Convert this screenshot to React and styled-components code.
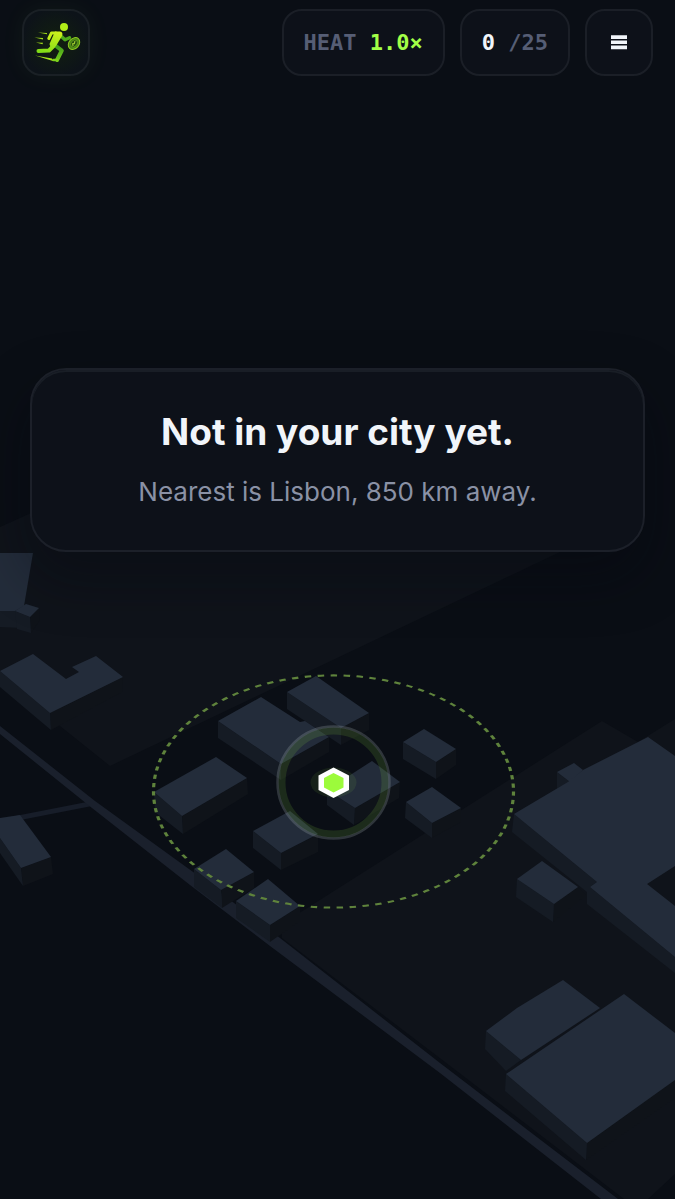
import React from 'react';
import styled, { createGlobalStyle } from 'styled-components';

// Styled Components

const GlobalStyle = createGlobalStyle`
  * {
    box-sizing: border-box;
  }

  body {
    margin: 0;
    background-color: #0a0e15;
    font-family: Inter, 'Liberation Sans', sans-serif;
  }
`;

const Screen = styled.div`
  position: relative;
  display: flex;
  flex-direction: column;
  min-height: 100vh;
  overflow: hidden;
  background-color: #0a0e15;
`;

/* The map is the canvas that everything else floats on */
const MapCanvas = styled.svg`
  position: absolute;
  inset: 0;
  width: 100%;
  height: 100%;
`;

const TopBar = styled.header`
  position: relative;
  display: flex;
  align-items: center;
  gap: 15px;
  padding: 9px 22px;
`;

const LogoLink = styled.a`
  display: flex;
  align-items: center;
  justify-content: center;
  width: 68px;
  height: 67px;
  margin-right: auto;
  border: 2px solid #1a2025;
  border-radius: 20px;
  background: radial-gradient(circle, #12200f 0%, #0d1319 75%);
  box-shadow: 0 0 24px rgba(163, 255, 71, 0.05);
`;

const Pill = styled.div`
  display: flex;
  align-items: center;
  height: 67px;
  padding: 0 20px;
  border: 2px solid #1b1f27;
  border-radius: 20px;
  background-color: #0d1119;
  color: ${(props) => props.$color || '#f1f5fa'};
  font-family: 'DejaVu Sans Mono', 'Liberation Mono', monospace;
  font-size: 22px;
  font-weight: 700;
  white-space: pre;
`;

const Muted = styled.span`
  color: #565e75;
`;

const MenuButton = styled.button`
  display: flex;
  align-items: center;
  justify-content: center;
  width: 68px;
  height: 67px;
  padding: 0;
  border: 2px solid #1b1f27;
  border-radius: 20px;
  background-color: #0d1119;
  color: #f1f5fa;
  cursor: pointer;
`;

const Content = styled.main`
  position: relative;
  padding: 283px 30px 0;
`;

const NoticeCard = styled.section`
  display: flex;
  flex-direction: column;
  align-items: center;
  gap: 12px;
  padding: 38px 24px 34px;
  border: 2px solid #1c2029;
  border-radius: 36px;
  background-color: #0d1119;
  box-shadow:
    inset 0 2px 0 #191e26,
    0 24px 56px rgba(5, 8, 14, 0.4);
  text-align: center;
`;

const NoticeTitle = styled.h1`
  margin: 0;
  color: #f1f5fa;
  font-size: 37px;
  font-weight: 700;
  line-height: 48px;
`;

const NoticeText = styled.p`
  margin: 0;
  color: #8a91a5;
  font-size: 26px;
  line-height: 48px;
`;

// Map data

const LAND = [
  '0,527 60,500 620,500 560,552 110,766 60,726 0,680',
  '282,924 602,721 638,742 675,719 675,1174 648,1199 624,1199 445,1062 282,938',
];

// Each building is a roof with its two visible walls
const BUILDINGS = [
  { roof: '0,553 33,553 24,606 15,611 0,611', left: '0,611 15,611 22,628 0,627' },
  {
    roof: '15,611 26,604 39,608 30,617',
    left: '15,611 30,617 31,633 17,629',
    right: '30,617 39,608 40,620 31,633',
  },
  {
    roof: '0,671 33,654 66,679 79,672 72,667 96,656 123,677 50,713',
    left: '0,671 50,713 51,730 0,687',
    right: '50,713 123,677 122,692 51,730',
  },
  {
    roof: '0,818 20,815 51,857 21,868 0,838',
    left: '0,838 21,868 23,886 0,853',
    right: '21,868 51,857 53,874 23,886',
  },
  {
    roof: '287,692 316,676 369,713 341,728',
    left: '287,692 341,728 341,745 287,709',
    right: '341,728 369,713 369,730 341,745',
  },
  {
    roof: '218,721 261,697 300,722 305,721 329,737 281,764',
    left: '218,721 281,764 281,780 218,738',
    right: '281,764 329,737 329,752 281,780',
  },
  {
    roof: '154,792 216,757 247,778 182,816',
    left: '154,792 182,816 183,834 155,812',
    right: '182,816 247,778 248,794 183,834',
  },
  {
    roof: '253,831 290,811 318,834 281,853',
    left: '253,831 281,853 281,870 253,848',
    right: '281,853 318,834 318,852 281,870',
  },
  {
    roof: '194,869 226,849 254,872 221,890',
    left: '194,869 221,890 222,908 194,887',
    right: '221,890 254,872 254,888 222,908',
  },
  {
    roof: '236,901 268,879 300,906 270,925',
    left: '236,901 270,925 270,942 236,918',
    right: '270,925 300,906 300,921 270,942',
  },
  {
    roof: '403,742 424,729 456,749 436,762',
    left: '403,742 436,762 436,779 403,759',
    right: '436,762 456,749 456,765 436,779',
  },
  {
    roof: '406,802 432,787 461,808 432,823',
    left: '406,802 432,823 432,838 405,818',
    right: '432,823 461,808 461,822 432,838',
  },
  {
    roof: '327,790 372,761 400,782 355,808',
    left: '327,790 355,808 354,825 327,805',
    right: '355,808 400,782 399,798 354,825',
  },
  { roof: '557,772 574,763 583,770 570,782', left: '557,772 570,782 557,789' },
  {
    roof: '514,814 568,782 583,770 648,737 675,756 675,866 647,884 675,906 675,957 590,887 597,882',
    left: '514,814 597,882 590,887 675,957 675,973 587,904 587,892 512,832',
  },
  {
    roof: '517,879 542,861 578,887 554,904',
    left: '517,879 554,904 553,922 516,897',
    right: '554,904 578,887 586,895 553,922',
  },
  { roof: '486,1031 517,1008 563,980 600,1008 521,1060', left: '486,1031 521,1060 506,1071 485,1049' },
  {
    roof: '506,1074 624,994 675,1033 675,1080 587,1143',
    left: '506,1074 587,1143 586,1160 505,1091',
    right: '587,1143 675,1080 675,1098 586,1160',
  },
];

const RunnerIcon = () => (
  <svg width="50" height="46" viewBox="31 20 50 46" fill="none" aria-hidden="true">
    <defs>
      <linearGradient id="runner" gradientUnits="userSpaceOnUse" x1="54" y1="30" x2="46" y2="54">
        <stop offset="0" stopColor="#d0f21c" />
        <stop offset="1" stopColor="#7fdc17" />
      </linearGradient>
      <linearGradient id="runnerLeg" gradientUnits="userSpaceOnUse" x1="56" y1="46" x2="60" y2="62">
        <stop offset="0" stopColor="#3c9a1b" />
        <stop offset="1" stopColor="#7dd21c" />
      </linearGradient>
    </defs>
    <circle cx="64" cy="27" r="4" fill="#b2ed18" />
    {/* Far arm and front leg sit behind the body */}
    <g strokeWidth="3.4" strokeLinecap="round" strokeLinejoin="round">
      <path d="M61.5 36.5 L65 39.8 L69.5 37.8" stroke="#4eac1b" />
      <path d="M56 46 L61.8 50.5 L57 60" stroke="url(#runnerLeg)" strokeWidth="4" />
      <path d="M53.5 60 L57 60" stroke="#7dd21c" strokeWidth="2.6" />
      <path d="M56 33 L51.5 33 L48.8 38.5" stroke="#c3ef1b" strokeWidth="3" />
      <path d="M53.5 46 L49 50.5 L38.5 51" stroke="url(#runner)" strokeWidth="4" />
    </g>
    <path d="M55 31.5 L60 31.5 Q63.5 32 62 36 L56 46 L51 48.5 L49.5 44 Z" fill="url(#runner)" />
    <path d="M38 32.5 L47 33 L47 34.3 Z M34.5 37.5 L43 38 L43 39.5 Z M36 42.5 L43 42.8 L42.5 44.2 Z" fill="#a1dd1a" />
    <path d="M35 55.5 L52 58.5 L53 61 Z" fill="#a6e51a" />
    <g transform="rotate(-48 74 43.5)">
      <ellipse cx="74" cy="43.5" rx="6.5" ry="5" fill="#4a8915" stroke="#8fca20" strokeWidth="1" />
      <ellipse cx="74" cy="43.5" rx="4" ry="3" fill="#26520f" stroke="#6fa51e" strokeWidth="0.7" />
      <path d="M71.5 44.5 L73 42.5 L74 44 L76.5 42.5" stroke="#b2dc34" strokeWidth="0.9" />
    </g>
  </svg>
);

const MenuIcon = () => (
  <svg width="16" height="15" viewBox="0 0 16 15" fill="currentColor" aria-hidden="true">
    <path d="M0 0.3h16v3.7H0zM0 5.4h16v3.7H0zM0 10.5h16v3.7H0z" />
  </svg>
);

const CityMap = () => (
  <MapCanvas viewBox="0 0 675 1199" preserveAspectRatio="xMidYMid slice" role="img" aria-label="City map">
    {LAND.map((points) => (
      <polygon key={points} points={points} fill="#0f131a" />
    ))}

    {/* Roads */}
    <polygon points="0,819 92,801 92,806 0,824" fill="#171d29" />
    <polygon
      points="0,726 95,801 200,877 280,938 440,1063 618,1199 601,1199 440,1073 270,946 190,885 92,808 0,734"
      fill="#1a202c"
    />

    {BUILDINGS.map(({ roof, left, right }) => (
      <g key={roof}>
        {right && <polygon points={right} fill="#0f1319" />}
        <polygon points={left} fill="#151b24" />
        <polygon points={roof} fill="#232c3a" />
      </g>
    ))}

    {/* Search radius, a circle lying flat on the tilted ground */}
    <circle
      r="180"
      transform="translate(333.5 791.5) scale(1 0.645)"
      fill="none"
      stroke="#5f833c"
      strokeWidth="3.2"
      strokeDasharray="6.5 6.5"
    />

    {/* Player marker */}
    <circle cx="333.5" cy="782.5" r="51.5" fill="none" stroke="#a3ff47" strokeOpacity="0.12" strokeWidth="7" />
    <circle cx="333.5" cy="782.5" r="56" fill="none" stroke="#b4c4c4" strokeOpacity="0.22" strokeWidth="2.5" />
    <ellipse cx="333.5" cy="782.5" rx="23" ry="15" fill="#a3ff47" fillOpacity="0.08" />
    <polygon points="333.5,767.5 349,775.5 349,790 333.5,798 318.5,790 318.5,775.5" fill="#fff" />
    <polygon points="333.5,773 343.5,778 343.5,787.5 333.5,792.5 324,787.5 324,778" fill="#9cfb3b" />
  </MapCanvas>
);

// App Component

const App = () => {
  const heat = '1.0×';
  const collected = 0;
  const total = 25;

  return (
    <>
      <GlobalStyle />
      <Screen>
        <CityMap />

        <TopBar>
          <LogoLink href="#" aria-label="Home">
            <RunnerIcon />
          </LogoLink>
          <Pill $color="#a3ff47">
            <Muted>HEAT </Muted>
            {heat}
          </Pill>
          <Pill>
            {collected}
            <Muted> /{total}</Muted>
          </Pill>
          <MenuButton type="button" aria-label="Menu">
            <MenuIcon />
          </MenuButton>
        </TopBar>

        <Content>
          <NoticeCard>
            <NoticeTitle>Not in your city yet.</NoticeTitle>
            <NoticeText>Nearest is Lisbon, 850 km away.</NoticeText>
          </NoticeCard>
        </Content>
      </Screen>
    </>
  );
};

export default App;
